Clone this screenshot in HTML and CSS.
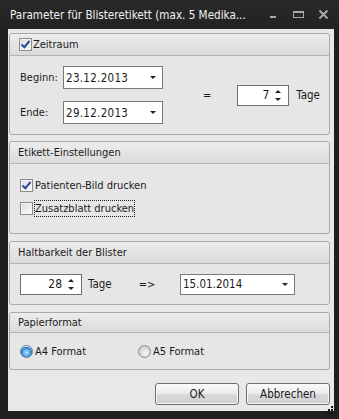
FILE: index.html
```html
<!DOCTYPE html>
<html lang="de">
<head>
  <meta charset="UTF-8">
  <title>Parameter für Blisteretikett</title>
  <link rel="stylesheet" href="styles.css">
</head>
<body>

<div class="window">
  <div class="titlebar">
    <div class="title">Parameter für Blisteretikett (max. 5 Medika...</div>
    <div class="controls">
      <svg class="ctl ctl-min" width="6" height="9" viewBox="0 0 6 9"><rect x="0" y="6" width="6" height="2" fill="#a9a9a9"/></svg>
      <svg class="ctl ctl-max" width="11" height="9" viewBox="0 0 11 9"><rect x="0.5" y="1.5" width="10" height="6" fill="none" stroke="#a9a9a9"/><rect x="0" y="1" width="11" height="2" fill="#a9a9a9"/></svg>
      <svg class="ctl ctl-close" width="9" height="9" viewBox="0 0 9 9"><path d="M0.5 0.5 L8.5 8.5 M8.5 0.5 L0.5 8.5" stroke="#a9a9a9" stroke-width="2"/></svg>
    </div>
  </div>

  <div class="client">
    <div class="group group-zeit">
      <div class="group-head head-check">
        <span class="check checked"></span>
        <span>Zeitraum</span>
      </div>
      <div class="group-body zeit-body">
        <div class="zeit-rows">
          <div class="zeit-row">
            <span class="zeit-label">Beginn:</span>
            <div class="datebox"><span>23.12.2013</span><span class="drop"></span></div>
          </div>
          <div class="zeit-row">
            <span class="zeit-label">Ende:</span>
            <div class="datebox"><span>29.12.2013</span><span class="drop"></span></div>
          </div>
        </div>
        <span class="equals">=</span>
        <div class="spin spin-small"><span class="spin-value">7</span><span class="spin-arrows"><span class="up"></span><span class="down"></span></span></div>
        <span class="unit">Tage</span>
      </div>
    </div>

    <div class="group group-etikett">
      <div class="group-head">Etikett-Einstellungen</div>
      <div class="group-body etikett-body">
        <div class="check-row"><span class="check checked"></span><span>Patienten-Bild drucken</span></div>
        <div class="check-row"><span class="check"></span><span class="focus">Zusatzblatt drucken</span></div>
      </div>
    </div>

    <div class="group group-halt">
      <div class="group-head">Haltbarkeit der Blister</div>
      <div class="group-body halt-body">
        <div class="spin spin-wide"><span class="spin-value">28</span><span class="spin-arrows"><span class="up"></span><span class="down"></span></span></div>
        <span class="unit">Tage</span>
        <span class="arrow-text">=&gt;</span>
        <div class="datebox datebox-wide"><span>15.01.2014</span><span class="drop"></span></div>
      </div>
    </div>

    <div class="group group-papier">
      <div class="group-head">Papierformat</div>
      <div class="group-body papier-body">
        <div class="radio-row radio-a4"><span class="radio selected"></span><span>A4 Format</span></div>
        <div class="radio-row"><span class="radio"></span><span>A5 Format</span></div>
      </div>
    </div>

    <div class="buttons">
      <button class="btn">OK</button>
      <button class="btn">Abbrechen</button>
    </div>
  </div>

  <svg class="grip" width="11" height="11" viewBox="0 0 11 11">
    <rect x="8" y="0" width="2" height="2" fill="#111"/>
    <rect x="5" y="3" width="2" height="2" fill="#111"/>
    <rect x="8" y="3" width="2" height="2" fill="#111"/>
    <rect x="2" y="6" width="2" height="2" fill="#111"/>
    <rect x="5" y="6" width="2" height="2" fill="#111"/>
    <rect x="8" y="6" width="2" height="2" fill="#111"/>
  </svg>
</div>

</body>
</html>
```

FILE: styles.css
```css
body {
  margin: 0;
  background: #1d1d1d;
  font-family: "DejaVu Sans Condensed", "DejaVu Sans", sans-serif;
  font-stretch: condensed;
  font-size: 11px;
  color: #1b1b1b;
}

.window {
  position: relative;
  width: 339px;
  height: 419px;
  display: flex;
  flex-direction: column;
  background: #1f1f1f;
  overflow: hidden;
}

.titlebar {
  height: 29px;
  display: flex;
  align-items: center;
  padding: 0 11px 0 10px;
  background: linear-gradient(#2a2a2a, #222);
}

.title {
  flex: 1;
  min-width: 0;
  color: #f2f2f2;
  font-size: 11.6px;
  white-space: nowrap;
  overflow: hidden;
}

.controls {
  display: flex;
  align-items: center;
}

.ctl-min {
  margin-right: 17px;
}

.ctl-max {
  margin-right: 15px;
}

.client {
  flex: 1;
  margin: 0 5px 8px 8px;
  padding: 4px 4px 0 1px;
  background: #e8e8e8;
  display: flex;
  flex-direction: column;
}

.group {
  border: 1px solid #a9a9a9;
  border-radius: 3px;
  background: #e6e6e6;
  display: flex;
  flex-direction: column;
  box-sizing: border-box;
}

.group-zeit { height: 102px; }
.group-etikett { height: 93px; margin-top: 6px; }
.group-halt { height: 64px; margin-top: 7px; }
.group-papier { height: 58px; margin-top: 7px; }

.group-head {
  height: 21px;
  display: flex;
  align-items: center;
  padding-left: 8px;
  background: linear-gradient(#ededed, #dbdbdb);
  border-bottom: 1px solid #b3b3b3;
  border-radius: 3px 3px 0 0;
}

.group-papier .group-head {
  height: 19px;
}

.head-check {
  padding-left: 9px;
  gap: 1px;
}

.group-body {
  flex: 1;
  display: flex;
}

/* Zeitraum */
.zeit-body {
  align-items: center;
  padding-left: 10px;
}

.zeit-rows {
  display: flex;
  flex-direction: column;
  gap: 12px;
}

.zeit-row {
  display: flex;
  align-items: center;
}

.zeit-label {
  width: 43px;
}

.datebox {
  width: 100px;
  height: 23px;
  box-sizing: border-box;
  border: 1px solid #7a7a7a;
  background: #fff;
  display: flex;
  align-items: center;
  justify-content: space-between;
  padding: 0 6px 0 2px;
  font-size: 11.5px;
  letter-spacing: 0.3px;
}

.datebox-wide {
  width: 115px;
  height: 21px;
  margin-left: auto;
  margin-right: 34px;
  letter-spacing: 0;
}

.drop {
  width: 0;
  height: 0;
  border-left: 3px solid transparent;
  border-right: 3px solid transparent;
  border-top: 3px solid #222;
}

.equals {
  margin-left: 40px;
}

.spin {
  height: 21px;
  box-sizing: border-box;
  border: 1px solid #707070;
  background: #fff;
  display: flex;
  align-items: center;
  justify-content: flex-end;
  font-size: 12px;
}

.spin-small {
  width: 52px;
  margin-left: 26px;
}

.spin-wide {
  width: 62px;
}

.spin-value {
  margin-right: 3px;
}

.spin-arrows {
  width: 12px;
  display: flex;
  flex-direction: column;
  align-items: center;
  gap: 5px;
  margin-right: 4px;
}

.spin-arrows .up {
  border-left: 3px solid transparent;
  border-right: 3px solid transparent;
  border-bottom: 3px solid #222;
}

.spin-arrows .down {
  border-left: 3px solid transparent;
  border-right: 3px solid transparent;
  border-top: 3px solid #222;
}

.unit {
  margin-left: 7px;
  font-size: 11.5px;
}

/* Etikett */
.etikett-body {
  flex-direction: column;
  padding: 13px 0 0 10px;
  gap: 7px;
}

.check-row {
  height: 16px;
  display: flex;
  align-items: center;
  gap: 2px;
}

.check {
  width: 13px;
  height: 13px;
  box-sizing: border-box;
  border: 1px solid #8c8c8c;
  background: linear-gradient(135deg, #dcdcdc, #fbfbfb);
  box-shadow: inset 0 0 0 1px #f4f4f4;
  position: relative;
}

.check.checked::after {
  content: "";
  position: absolute;
  left: 3px;
  top: 0px;
  width: 3px;
  height: 7px;
  border-right: 2px solid #2a4c96;
  border-bottom: 2px solid #2a4c96;
  transform: rotate(40deg);
}

.focus {
  outline: 1px dotted #222;
  padding: 1px 0;
}

/* Haltbarkeit */
.halt-body {
  align-items: center;
  padding: 0 0 0 10px;
}

.halt-body .unit {
  margin-left: 6px;
}

.arrow-text {
  margin-left: 27px;
}

/* Papierformat */
.papier-body {
  align-items: center;
  padding-left: 10px;
}

.radio-row {
  display: flex;
  align-items: center;
  gap: 2px;
}

.radio-a4 {
  width: 118px;
}

.radio {
  width: 13px;
  height: 13px;
  box-sizing: border-box;
  border-radius: 50%;
  border: 1px solid #8a8a8a;
  background: radial-gradient(circle at 60% 65%, #f6f6f6 0, #cfcfcf 70%);
}

.radio.selected {
  border-color: #5a7fb0;
  background: radial-gradient(circle at 50% 60%, #bfe3fb 0, #4f9ee0 45%, #2c6fb8 60%, #dfe8f2 72%);
}

/* Buttons */
.buttons {
  margin-top: auto;
  display: flex;
  justify-content: flex-end;
  gap: 7px;
  padding-bottom: 6px;
}

.btn {
  width: 84px;
  height: 22px;
  border: 1px solid #6e6e6e;
  border-radius: 3px;
  background: linear-gradient(#fbfbfb 0, #ececec 45%, #d9d9d9 55%, #cfcfcf 100%);
  box-shadow: inset 0 0 0 1px #f8f8f8;
  font-family: inherit;
  font-stretch: condensed;
  font-size: 11.5px;
  color: #1b1b1b;
  padding: 0;
}

.grip {
  position: absolute;
  right: 5px;
  bottom: 2px;
}
```
